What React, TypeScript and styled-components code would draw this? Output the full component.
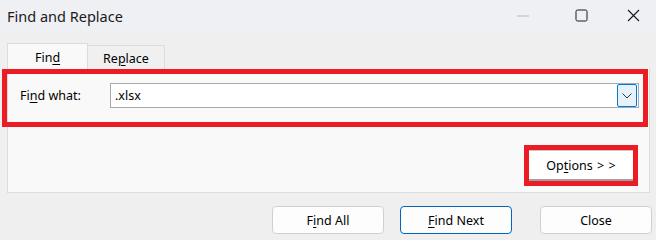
import React from 'react';
import styled, { createGlobalStyle } from 'styled-components';

const GlobalStyle = createGlobalStyle`
  html, body {
    margin: 0;
    padding: 0;
    background: #efefef;
  }
  body {
    font-family: "Noto Sans", "Open Sans", sans-serif;
    color: #000;
  }
`;

const Window = styled.div`
  width: 656px;
  height: 240px;
  display: flex;
  flex-direction: column;
  background: #efefef;
  overflow: hidden;
`;

const TitleBar = styled.div`
  height: 33px;
  display: flex;
  align-items: center;
  background: #eff0f4;
  padding-left: 7px;
`;

const Title = styled.div`
  flex: 1;
  font-size: 14.5px;
  color: #1a1a1a;
  margin-top: -2px;
`;

const Controls = styled.div`
  display: flex;
  align-items: center;
  height: 100%;
`;

const Control = styled.div<{ $w?: number }>`
  width: ${p => p.$w || 58}px;
  height: 100%;
  display: flex;
  align-items: center;
  justify-content: center;
  margin-top: -2px;
`;

const Body = styled.div`
  display: flex;
  flex-direction: column;
  padding: 10px 4px 0 7px;
`;

const Tabs = styled.div`
  display: flex;
  align-items: flex-end;
  height: 26px;
`;

const Tab = styled.div<{ $active?: boolean; $w: number }>`
  width: ${p => p.$w}px;
  height: ${p => (p.$active ? 26 : 24)}px;
  box-sizing: border-box;
  display: flex;
  align-items: center;
  justify-content: center;
  font-size: 12.5px;
  padding-top: 2px;
  background: ${p => (p.$active ? '#f9f9f9' : '#f0f0f0')};
  border: 1px solid #dcdcdc;
  border-bottom: none;
  border-left-width: ${p => (p.$active ? 1 : 0)}px;
`;

const Panel = styled.div`
  width: 643px;
  height: 124px;
  box-sizing: border-box;
  background: #f9f9f9;
  border: 1px solid #dcdcdc;
  border-top: none;
  display: flex;
  flex-direction: column;
`;

const Highlight = styled.div`
  border: 5px solid #ec1c24;
  box-sizing: border-box;
`;

const FindRow = styled(Highlight)`
  margin: 0 0 0 -6px;
  width: 646px;
  height: 58px;
  display: flex;
  align-items: center;
  padding: 0 4px 5px 13px;
`;

const Label = styled.div`
  width: 90px;
  font-size: 12.5px;
`;

const Combo = styled.div`
  flex: 1;
  height: 25px;
  box-sizing: border-box;
  border: 1px solid #a8a8b0;
  background: #fff;
  display: flex;
  align-items: center;
  padding: 1px 1px 1px 4px;
  font-size: 12.5px;
`;

const ComboText = styled.div`
  flex: 1;
`;

const DropButton = styled.div`
  width: 20px;
  height: 23px;
  box-sizing: border-box;
  border: 1px solid #0078d4;
  border-radius: 2px;
  background: #e5f1fb;
  display: flex;
  align-items: center;
  justify-content: center;
`;

const OptionsArea = styled.div`
  flex: 1;
  display: flex;
  justify-content: flex-end;
  align-items: flex-end;
  padding: 0 11px 6px 0;
`;

const OptionsFrame = styled(Highlight)`
  width: 114px;
  height: 41px;
  display: flex;
`;

const OptionsButton = styled.div`
  flex: 1;
  background: #fff;
  border-top: 1px solid #c8c8c8;
  border-bottom: 2px solid #a0a0a0;
  display: flex;
  align-items: center;
  justify-content: center;
  font-size: 12.5px;
  word-spacing: 1px;
`;

const Footer = styled.div`
  display: flex;
  justify-content: flex-end;
  padding-top: 13px;
`;

const Button = styled.div<{ $primary?: boolean; $gap?: number }>`
  width: 112px;
  height: 28px;
  box-sizing: border-box;
  margin-left: ${p => p.$gap || 0}px;
  border: 1px solid ${p => (p.$primary ? '#0067c0' : '#d0d0d0')};
  border-radius: 4px;
  background: #fdfdfd;
  display: flex;
  align-items: center;
  justify-content: center;
  font-size: 12.5px;
`;

const U = styled.span`
  text-decoration: underline;
  text-underline-offset: 2px;
`;

export default function App() {
  return (
    <>
      <GlobalStyle />
      <Window>
        <TitleBar>
          <Title>Find and Replace</Title>
          <Controls>
            <Control>
              <svg width="12" height="2" viewBox="0 0 12 2">
                <line x1="0" y1="1" x2="12" y2="1" stroke="#b8b8b8" strokeWidth="1" />
              </svg>
            </Control>
            <Control>
              <svg width="13" height="13" viewBox="0 0 13 13">
                <rect x="1" y="1" width="11" height="11" rx="1.5" fill="none" stroke="#1a1a1a" strokeWidth="1" />
              </svg>
            </Control>
            <Control $w={46}>
              <svg width="13" height="13" viewBox="0 0 13 13">
                <path d="M1 1 L12 12 M12 1 L1 12" stroke="#1a1a1a" strokeWidth="1.1" />
              </svg>
            </Control>
          </Controls>
        </TitleBar>
        <Body>
          <Tabs>
            <Tab $active $w={81}>Fin<U>d</U></Tab>
            <Tab $w={77}>Re<U>p</U>lace</Tab>
          </Tabs>
          <Panel>
            <FindRow>
              <Label>Fi<U>n</U>d what:</Label>
              <Combo>
                <ComboText>.xlsx</ComboText>
                <DropButton>
                  <svg width="10" height="6" viewBox="0 0 10 6">
                    <path d="M0.5 0.5 L5 5 L9.5 0.5" fill="none" stroke="#333" strokeWidth="1" />
                  </svg>
                </DropButton>
              </Combo>
            </FindRow>
            <OptionsArea>
              <OptionsFrame>
                <OptionsButton>Op<U>t</U>ions &gt; &gt;</OptionsButton>
              </OptionsFrame>
            </OptionsArea>
          </Panel>
          <Footer>
            <Button>F<U>i</U>nd All</Button>
            <Button $primary $gap={16}><U>F</U>ind Next</Button>
            <Button $gap={28}>Close</Button>
          </Footer>
        </Body>
      </Window>
    </>
  );
}
